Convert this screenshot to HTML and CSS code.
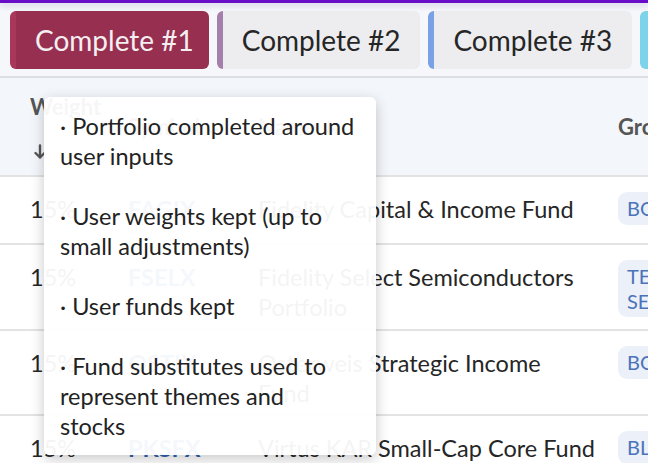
FILE: index.html
```html
<!DOCTYPE html>
<html>
<head>
<meta charset="utf-8">
<link rel="stylesheet" href="styles.css">
</head>
<body>
<div class="app">
  <div class="topbar"></div>
  <div class="tabs">
    <div class="tab tab-active">Complete #1</div>
    <div class="tab tab-2">Complete #2</div>
    <div class="tab tab-3">Complete #3</div>
    <div class="tab tab-4">Complete #4</div>
  </div>
  <div class="table">
    <div class="row head">
      <div class="hcell weight-h">
        <span>Weight</span>
        <svg class="sort" width="12" height="16" viewBox="0 0 12 16"><path d="M6 1.5V13.5M1.5 9L6 13.5L10.5 9" fill="none" stroke="#555" stroke-width="2.4" stroke-linecap="round" stroke-linejoin="round"/></svg>
      </div>
      <div class="hcell">Symbol <svg class="sort-inline" width="12" height="16" viewBox="0 0 12 16"><path d="M6 1.5V13.5M1.5 9L6 13.5L10.5 9" fill="none" stroke="#555" stroke-width="2.4" stroke-linecap="round" stroke-linejoin="round"/></svg></div>
      <div class="hcell">Name <svg class="sort-inline" width="12" height="16" viewBox="0 0 12 16"><path d="M6 1.5V13.5M1.5 9L6 13.5L10.5 9" fill="none" stroke="#555" stroke-width="2.4" stroke-linecap="round" stroke-linejoin="round"/></svg></div>
      <div class="hcell">Group</div>
    </div>
    <div class="row">
      <div class="cell">15%</div>
      <div class="cell sym">FAGIX</div>
      <div class="cell name">Fidelity Capital &amp; Income Fund</div>
      <div class="cell chip-cell"><span class="chip">BOND</span></div>
    </div>
    <div class="row">
      <div class="cell">15%</div>
      <div class="cell sym">FSELX</div>
      <div class="cell name">Fidelity Select Semiconductors<br>Portfolio</div>
      <div class="cell chip-cell"><span class="chip">TECH SECTOR</span></div>
    </div>
    <div class="row">
      <div class="cell">15%</div>
      <div class="cell sym">OSTIX</div>
      <div class="cell name">Osterweis Strategic Income<br>Fund</div>
      <div class="cell chip-cell"><span class="chip">BOND</span></div>
    </div>
    <div class="row">
      <div class="cell">15%</div>
      <div class="cell sym">PKSFX</div>
      <div class="cell name">Virtus KAR Small-Cap Core Fund</div>
      <div class="cell chip-cell"><span class="chip">BLEND</span></div>
    </div>
  </div>
  <div class="tooltip">
    <p>· Portfolio completed around<br>user inputs</p>
    <p>· User weights kept (up to<br>small adjustments)</p>
    <p>· User funds kept</p>
    <p>· Fund substitutes used to<br>represent themes and<br>stocks</p>
  </div>
</div>
</body>
</html>
```
FILE: styles.css
```css
* { box-sizing: border-box; }
html, body { margin: 0; padding: 0; }
body {
  width: 648px;
  height: 463px;
  overflow: hidden;
  background: #ffffff;
  font-family: "Lato", "Noto Sans", sans-serif;
  font-weight: 400;
  color: #262626;
}
.app {
  position: relative;
  width: 648px;
  height: 463px;
  overflow: hidden;
}
.topbar {
  height: 3px;
  background: #6a0dc9;
  box-shadow: 0 2px 6px rgba(60, 20, 120, 0.25);
  position: relative;
  z-index: 2;
}
.tabs {
  display: flex;
  gap: 8px;
  padding: 8px 10px 7px;
  background: #f5f7fb;
  border-bottom: 2px solid #dedfe2;
  white-space: nowrap;
}
.tab {
  flex: none;
  height: 58px;
  line-height: 58px;
  padding: 0 17px 0 19px;
  border-radius: 6px;
  border-left: 6px solid #a47fac;
  background: #ededf0;
  font-size: 28px;
  color: #262626;
}
.tab-active {
  background: #972f51;
  border-left-color: #a8375b;
  color: #f3eef0;
  padding-right: 15px;
}
.tab-2, .tab-3 { padding-right: 20px; }
.tab-3 { border-left-color: #78a1e6; }
.tab-4 { border-left-color: #7dd3ea; background: #7dd3ea; }
.row {
  display: grid;
  grid-template-columns: 98px 130px 360px 1fr;
  padding-left: 30px;
  min-height: 68px;
  align-items: start;
  border-bottom: 2px solid #e3e3e4;
  font-size: 23.5px;
  line-height: 30px;
}
.row.head {
  background: #f3f6fa;
  height: 99px;
  align-items: center;
  color: #555;
  font-weight: 700;
  font-size: 22px;
}
.hcell {
  padding: 12px 12px 12px 0;
  white-space: nowrap;
}
.cell {
  padding: 17px 12px 6px 0;
  white-space: nowrap;
}
.chip-cell {
  padding: 15px 0 12px 0;
}
.weight-h {
  align-self: start;
  padding-top: 14px;
  display: flex;
  flex-direction: column;
  align-items: flex-start;
}
.weight-h .sort { margin-top: 22px; margin-left: 4px; }
.sort-inline { vertical-align: -1px; margin-left: 2px; }
.sym {
  color: #2f62ae;
  font-weight: 700;
}
.chip {
  display: inline-block;
  background: #ecf0f8;
  color: #4a73b9;
  border-radius: 9px;
  padding: 4px 9px;
  font-size: 20px;
  line-height: 24.5px;
  font-weight: 400;
  white-space: normal;
  max-width: 80px;
}
.tooltip {
  position: absolute;
  left: 44px;
  top: 97px;
  width: 332px;
  padding: 14px 16px 14px 16px;
  background: rgba(255, 255, 255, 0.95);
  border-radius: 6px;
  box-shadow: 0 4px 14px rgba(0, 0, 0, 0.22);
  font-size: 23.5px;
  line-height: 30px;
  color: #222222;
  z-index: 5;
}
.tooltip p { margin: 0 0 30px; }
.tooltip p:last-child { margin-bottom: 0; }
```
